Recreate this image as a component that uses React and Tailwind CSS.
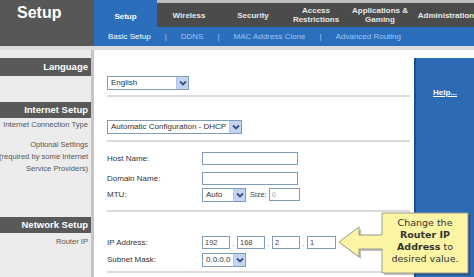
const tabs = [
  { w: "w-[64px]", lines: ["Wireless"] },
  { w: "w-[64px]", lines: ["Security"] },
  { w: "w-[62px]", lines: ["Access", "Restrictions"] },
  { w: "w-[66px]", lines: ["Applications &", "Gaming"] },
  { w: "w-[66px]", lines: ["Administration"] },
];

const subNav = ["DDNS", "MAC Address Clone", "Advanced Routing"];

const Chevron = () => (
  <span className="w-[12px] h-full flex items-center justify-center bg-[#c3d4f3] border-l border-[#b4c6ea]">
    <svg width="8" height="6" viewBox="0 0 8 6">
      <polyline points="1,1.5 4,4.5 7,1.5" fill="none" stroke="#3b4f80" strokeWidth="1.8" />
    </svg>
  </span>
);

const Select = ({ value, w }) => (
  <div className={`${w} h-[14px] border border-[#7f9db9] bg-white flex items-center justify-between`}>
    <span className="pl-[3px] text-[8px] text-[#333] whitespace-nowrap">{value}</span>
    <Chevron />
  </div>
);

const Input = ({ w, value = "", muted = false }) => (
  <div className={`${w} h-[13px] border border-[#7f9db9] bg-white flex items-center pl-[2px] text-[7.5px] ${muted ? "text-[#aaa]" : "text-[#444]"}`}>
    {value}
  </div>
);

const Bar = ({ children, h }) => (
  <div className={`${h} bg-[#595959] text-white font-bold text-[9.5px] flex items-center justify-end pr-[3px] whitespace-nowrap`}>
    {children}
  </div>
);

const Row = ({ label, children, mt }) => (
  <div className={`${mt} flex items-center h-[13px]`}>
    <span className="w-[95px] text-[8px] text-[#333] whitespace-nowrap">{label}</span>
    {children}
  </div>
);

const Sep = ({ mt }) => <div className={`${mt} border-t-2 border-[#dadada]`}></div>;

export default function App() {
  return (
    <div className="relative w-[474px] h-[277px] overflow-hidden bg-white font-['Liberation_Sans',Arial,sans-serif]">
      {/* header */}
      <div className="flex h-[46px]">
        <div className="w-[94px] bg-[#575757] text-white font-bold text-[16px] pl-[17px] pt-[3px] leading-[20px]">Setup</div>
        <div className="flex-1 flex flex-col min-w-0">
          <div className="flex h-[27px] bg-[#bdbdbd]">
            <div className="w-[63px] shrink-0 bg-[#2b6fbc] text-white font-bold text-[8px] flex items-center justify-center pt-[6px]">Setup</div>
            <div className="flex-1 flex mt-[3px] bg-[#4b4b4b] min-w-0">
              {tabs.map((t, i) => (
                <div key={i} className={`${t.w} shrink-0 flex flex-col items-center justify-center text-[#e8e8e8] font-bold text-[8px] leading-[9px] whitespace-nowrap`}>
                  {t.lines.map((l) => (
                    <span key={l}>{l}</span>
                  ))}
                </div>
              ))}
            </div>
          </div>
          <div className="h-[19px] bg-[#2b6fbc] flex items-center pl-[14px] gap-[14px] text-[8px] whitespace-nowrap">
            <span className="text-white">Basic Setup</span>
            {subNav.map((s) => (
              <span key={s} className="flex gap-[14px]">
                <span className="text-[#9cc8f2]">|</span>
                <span className="text-[#9cc8f2]">{s}</span>
              </span>
            ))}
          </div>
        </div>
      </div>
      <div className="h-[4px] bg-[#dcdcdc]"></div>

      {/* body */}
      <div className="flex h-[227px]">
        <div className="w-[94px] shrink-0 bg-[#ececec] border-r-[3px] border-[#c6c6c6] flex flex-col text-[7.6px] text-[#555] text-right leading-[12px] overflow-hidden">
          <div className="mt-[8px]"><Bar h="h-[18px]">Language</Bar></div>
          <div className="mt-[26px]"><Bar h="h-[16px]">Internet Setup</Bar></div>
          <div className="mt-[1px] pr-[3px] whitespace-nowrap flex justify-end">Internet Connection Type</div>
          <div className="mt-[8px] pr-[3px] whitespace-nowrap flex flex-col items-end">
            <span>Optional Settings</span>
            <span>(required by some Internet</span>
            <span>Service Providers)</span>
          </div>
          <div className="mt-[42px]"><Bar h="h-[16px]">Network Setup</Bar></div>
          <div className="mt-[3px] pr-[3px]">Router IP</div>
        </div>

        <div className="flex-1 flex flex-col pl-[13px] pr-[4px]">
          <div className="mt-[26px]"><Select value="English" w="w-[82px]" /></div>
          <Sep mt="mt-[5px]" />
          <div className="mt-[23px]"><Select value="Automatic Configuration - DHCP" w="w-[135px]" /></div>
          <Sep mt="mt-[6px]" />
          <Row label="Host Name:" mt="mt-[10px]"><Input w="w-[96px]" /></Row>
          <Row label="Domain Name:" mt="mt-[7px]"><Input w="w-[96px]" /></Row>
          <Row label="MTU:" mt="mt-[3px]">
            <Select value="Auto" w="w-[44px]" />
            <span className="ml-[4px] mr-[2px] text-[7.5px] text-[#444]">Size:</span>
            <Input w="w-[31px]" value="0" muted />
          </Row>
          <Sep mt="mt-[9px]" />
          <Row label="IP Address:" mt="mt-[24px]">
            <Input w="w-[28px]" value="192" />
            <span className="w-[7px] text-center text-[8px] text-[#777] self-end leading-[10px]">.</span>
            <Input w="w-[28px]" value="168" />
            <span className="w-[7px] text-center text-[8px] text-[#777] self-end leading-[10px]">.</span>
            <Input w="w-[28px]" value="2" />
            <span className="w-[7px] text-center text-[8px] text-[#777] self-end leading-[10px]">.</span>
            <Input w="w-[29px]" value="1" />
          </Row>
          <Row label="Subnet Mask:" mt="mt-[4px]"><Select value="0.0.0.0" w="w-[44px]" /></Row>
          <Sep mt="mt-[5px]" />
        </div>

        <div className="w-[60px] shrink-0 flex flex-col">
          <div className="h-[8px]"></div>
          <div className="flex-1 bg-[#2c6ab3] border-l-2 border-[#1e4f8c] pl-[17px] pt-[20px]">
            <span className="text-white font-bold text-[8px] underline">Help...</span>
          </div>
        </div>
      </div>

      {/* callout */}
      <svg className="absolute left-[331px] top-[205px]" width="143" height="72" viewBox="0 0 143 72">
        <path d="M53,10 H139 V70 H53 V46 H30 V54 L10,39 L30,24 V32 H53 Z" fill="rgba(0,0,0,0.25)" />
        <path d="M51,8 H137 V68 H51 V44 H28 V52 L8,37 L28,22 V30 H51 Z" fill="#fcf5a3" stroke="#9a9a8a" strokeWidth="1" />
        <path d="M50,31 V43" stroke="#fcf5a3" strokeWidth="2" />
      </svg>
      <div className="absolute left-[382px] top-[217px] w-[86px] text-center text-[9.5px] leading-[12px] text-[#333] font-['DejaVu_Sans',Verdana,sans-serif]">
        <div>Change the</div>
        <div className="font-bold">Router IP</div>
        <div><span className="font-bold">Address</span> to</div>
        <div>desired value.</div>
      </div>
    </div>
  );
}
